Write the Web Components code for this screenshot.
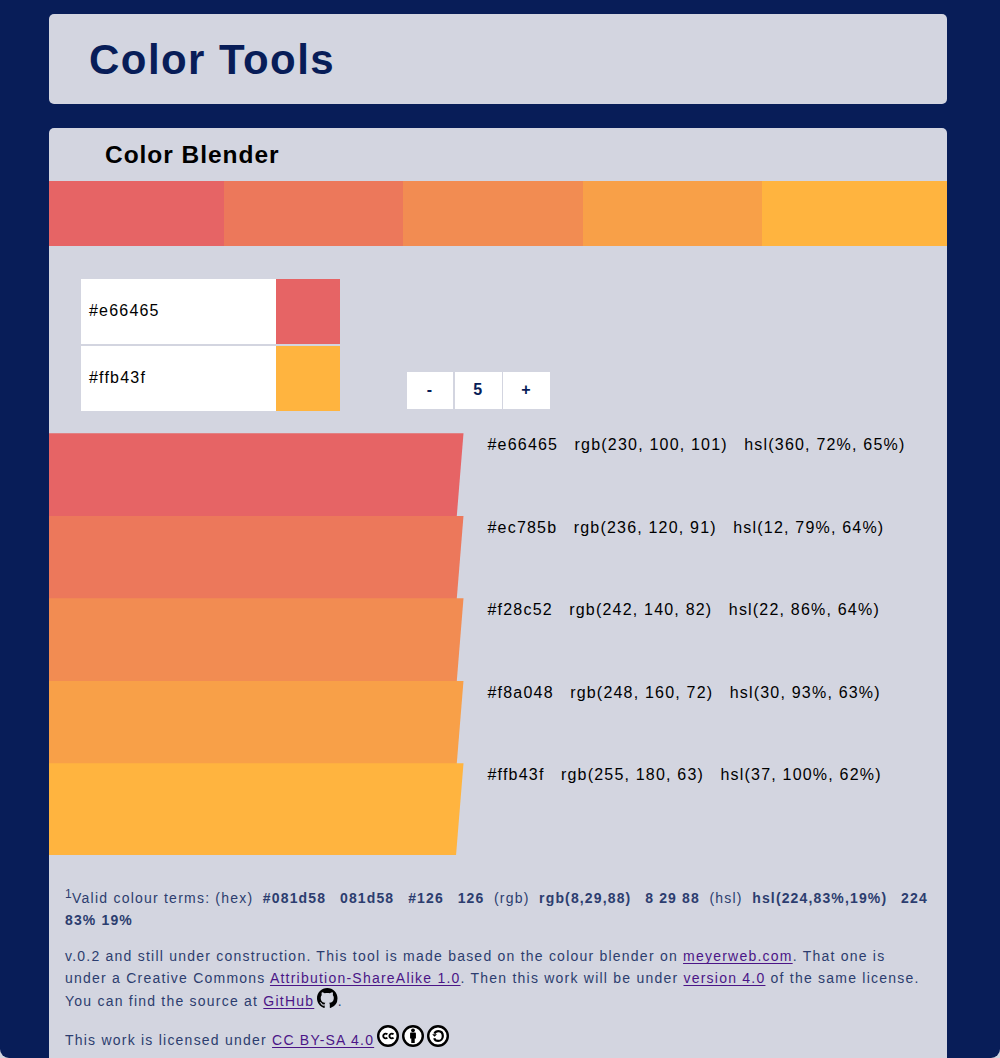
<!DOCTYPE html>
<html lang="en">
<head>
<meta charset="utf-8">
<title>Color Tools</title>
<style>
html{background:#d3d5de;height:100%;overflow:hidden}
body{margin:0;height:1058px;overflow:hidden;background:#081d58;border-radius:0 0 9px 9px;font-family:"Liberation Sans",Arial,sans-serif;color:#000}
</style>
</head>
<body>
<color-tools></color-tools>
<script>
const attach=(el,html)=>{el.attachShadow({mode:'open'}).innerHTML=html;};
const COLORS=[
 ['#e66465','rgb(230, 100, 101)','hsl(360, 72%, 65%)'],
 ['#ec785b','rgb(236, 120, 91)','hsl(12, 79%, 64%)'],
 ['#f28c52','rgb(242, 140, 82)','hsl(22, 86%, 64%)'],
 ['#f8a048','rgb(248, 160, 72)','hsl(30, 93%, 63%)'],
 ['#ffb43f','rgb(255, 180, 63)','hsl(37, 100%, 62%)']];

customElements.define('page-header',class extends HTMLElement{constructor(){super();attach(this,`
<style>
:host{display:flex;align-items:center;box-sizing:border-box;height:89.5px;padding:2px 40px 0;background:#d3d5e0;border-radius:5px}
h1{margin:0;font-size:42px;line-height:48px;letter-spacing:1.45px;color:#081d58}
</style><h1><slot></slot></h1>`);}});

customElements.define('color-strip',class extends HTMLElement{constructor(){super();attach(this,`
<style>
:host{display:flex;height:65px}
i{flex:0 0 179.4px}
i:first-of-type{flex-basis:175px}
i:last-of-type{flex:1}
</style>${COLORS.map(c=>`<i style="background:${c[0]}"></i>`).join('')}`);}});

customElements.define('color-input',class extends HTMLElement{connectedCallback(){const v=this.getAttribute('value');attach(this,`
<style>
:host{display:flex;height:64.8px}
span{width:194.7px;box-sizing:border-box;padding-left:8px;background:#fff;line-height:63px;font-size:16px;letter-spacing:1.2px}
i{width:64.5px;background:${v}}
</style><span>${v}</span><i></i>`);}});

customElements.define('step-control',class extends HTMLElement{constructor(){super();attach(this,`
<style>
:host{display:flex;gap:1.5px;height:37.3px;color:#081d58;font-size:16px;font-weight:bold}
div{width:46.7px;box-sizing:border-box;padding-right:1px;background:#fff;text-align:center;line-height:36.5px}
</style><div>-</div><div>5</div><div>+</div>`);}});

customElements.define('color-row',class extends HTMLElement{connectedCallback(){attach(this,`
<style>
:host{display:flex;height:82.5px;font-size:16px;letter-spacing:1.2px;line-height:24px}
i{flex:none;width:414.5px;height:92px;background:${this.getAttribute('hex')};clip-path:polygon(0 0,100% 0,98.2% 100%,0 100%)}
div{display:flex;gap:16.4px;padding-left:24px;white-space:nowrap}
</style><i></i><div><span>${this.getAttribute('hex')}</span><span>${this.getAttribute('rgb')}</span><span>${this.getAttribute('hsl')}</span></div>`);}});

customElements.define('mark-icon',class extends HTMLElement{connectedCallback(){
const ring='<circle cx="32" cy="32" r="28.500" fill="#fff" stroke="#000" stroke-width="7"/>';
const art={
github:'<svg viewBox="0 0 16 16" width="20.5" height="20.5"><path d="M8 0C3.58 0 0 3.58 0 8c0 3.54 2.29 6.53 5.47 7.59.4.07.55-.17.55-.38 0-.19-.01-.82-.01-1.49-2.01.37-2.53-.49-2.69-.94-.09-.23-.48-.94-.82-1.13-.28-.15-.68-.52-.01-.53.63-.01 1.08.58 1.23.82.72 1.21 1.87.87 2.33.66.07-.52.28-.87.51-1.07-1.78-.2-3.64-.89-3.64-3.95 0-.87.31-1.59.82-2.15-.08-.2-.36-1.02.08-2.12 0 0 .67-.21 2.2.82.64-.18 1.32-.27 2-.27s1.36.09 2 .27c1.53-1.04 2.2-.82 2.2-.82.44 1.1.16 1.92.08 2.12.51.56.82 1.27.82 2.15 0 3.07-1.87 3.75-3.65 3.95.29.25.54.73.54 1.48 0 1.07-.01 1.93-.01 2.2 0 .21.15.46.55.38A8.01 8.01 0 0 0 16 8c0-4.42-3.58-8-8-8z"/></svg>',
cc:`<svg viewBox="0 0 64 64" width="22" height="22">${ring}<path d="M30 27.500a6.800 6.800 0 1 0 0 9M48 27.500a6.800 6.800 0 1 0 0 9" fill="none" stroke="#000" stroke-width="5.500"/></svg>`,
by:`<svg viewBox="0 0 64 64" width="22" height="22">${ring}<circle cx="32" cy="15.5" r="5.500"/><path d="M26 22h12q2.500 0 2.500 2.500V39h-3.500v13H27V39h-3.500V24.500Q23.500 22 26 22z"/></svg>`,
sa:`<svg viewBox="0 0 64 64" width="22" height="22">${ring}<path d="M21.500 25C24 19.500 28 17.500 33 17.500c8 0 13 6 13 14.500s-6 14.500-13.500 14.500c-5.500 0-10-3-11.500-8" fill="none" stroke="#000" stroke-width="6.500"/><path d="M15 27h14l-7 7.500z"/></svg>`};
attach(this,`<style>:host{display:inline-block;line-height:0}svg{display:block}</style>${art[this.getAttribute('name')]}`);}});

customElements.define('tool-notes',class extends HTMLElement{constructor(){super();attach(this,`
<style>
:host{display:block;padding:31.700px 16px 0;font-size:14px;line-height:22px;letter-spacing:1.225px;color:#2c3d6f;white-space:nowrap}
p{margin:0 0 14px}
b{padding:0 4.36px;letter-spacing:1.14px}
b.wrap{padding-right:0}b.cont{padding-left:0}
sup{font-size:12px;line-height:0;vertical-align:5px;letter-spacing:.4px}
a{color:#4b1587;text-decoration:underline;text-underline-offset:2px;text-decoration-thickness:1px;text-decoration-skip-ink:none}
mark-icon{margin:-3px 0 0 3px;vertical-align:-2px}
p:nth-of-type(2) mark-icon{margin-top:-.5px;vertical-align:-3px}
p:last-of-type{margin-top:16px}
</style>
<p><sup>1</sup>Valid colour terms: (hex) <b>#081d58</b> <b>081d58</b> <b>#126</b> <b>126</b> (rgb) <b>rgb(8,29,88)</b> <b>8 29 88</b> (hsl) <b>hsl(224,83%,19%)</b> <b class="wrap">224</b><br><b class="cont">83% 19%</b></p>
<p>v.0.2 and still under construction. This tool is made based on the colour blender on <a>meyerweb.com</a>. That one is<br>under a Creative Commons <a>Attribution-ShareAlike 1.0</a>. Then this work will be under <a>version 4.0</a> of the same license.<br>You can find the source at <a>GitHub</a><mark-icon name="github"></mark-icon>.</p>
<p>This work is licensed under <a>CC BY-SA 4.0</a><mark-icon name="cc"></mark-icon><mark-icon name="by"></mark-icon><mark-icon name="sa"></mark-icon></p>`);}});

customElements.define('color-blender',class extends HTMLElement{constructor(){super();attach(this,`
<style>
:host{display:block;background:#d3d5e0;border-radius:5px 5px 0 0}
h2{margin:0;height:52.8px;padding-left:56px;font-size:24.5px;line-height:53px;letter-spacing:.96px}
.controls{display:flex;height:187px;padding:32.800px 32px 0;box-sizing:border-box;gap:66.500px}
.inputs{display:grid;gap:2px;align-content:start}
step-control{margin-top:92.800px}
.rows{height:421.800px}
</style>
<h2><slot></slot></h2><color-strip></color-strip>
<div class="controls"><div class="inputs"><color-input value="#e66465"></color-input><color-input value="#ffb43f"></color-input></div><step-control></step-control></div>
<div class="rows">${COLORS.map(c=>`<color-row hex="${c[0]}" rgb="${c[1]}" hsl="${c[2]}"></color-row>`).join('')}</div>
<tool-notes></tool-notes>`);}});

customElements.define('color-tools',class extends HTMLElement{constructor(){super();attach(this,`
<style>:host{display:flex;flex-direction:column;gap:24.500px;box-sizing:border-box;height:1058px;padding:14.400px 53px 0 49px}
page-header{flex:none}
color-blender{flex:1;min-height:0}</style>
<page-header>Color Tools</page-header><color-blender>Color Blender</color-blender>`);}});
</script>
</body>
</html>
